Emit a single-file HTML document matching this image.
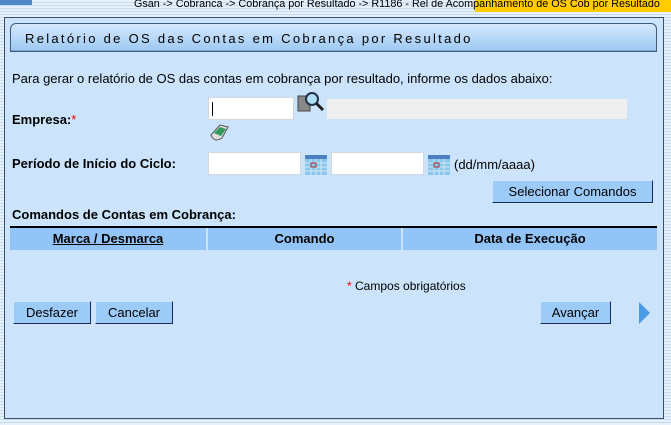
<!DOCTYPE html>
<html><head><meta charset="utf-8"><style>
*{margin:0;padding:0;box-sizing:border-box}
body{width:671px;height:425px;overflow:hidden;font-family:"Liberation Sans",Arial,sans-serif;font-size:12px;color:#000;
background:repeating-linear-gradient(to bottom,#e6f0fa 0,#e6f0fa 2px,#c8dcf0 2px,#c8dcf0 3px);position:relative}
.a{position:absolute}
.panel{left:4px;top:17px;width:660px;height:402px;background:#cbe4fb;border:1px solid #39506b}
.title{left:10px;top:23px;width:647px;height:29px;background:linear-gradient(#d6e9fc,#9cc8f3);border:1px solid #3b5a7c;border-radius:6px 6px 0 0;box-shadow:inset 0 -1px #7fa9d4}
.title span{position:absolute;left:14px;top:7px;font-size:13px;letter-spacing:2.3px;color:#000}
.inp{background:#fff;border:1px solid #d0d8e0;height:23px}
.btn{background:#9ccbf8;border-top:1px solid #cfe6fc;border-left:1px solid #cfe6fc;border-right:1px solid #1a2a5a;border-bottom:1px solid #1a2a5a;height:23px;font-size:13px;text-align:center;line-height:21px}
b{font-weight:bold}
.th{top:228px;height:22px;background:#92c4f7;font-weight:bold;font-size:13px;text-align:center;line-height:22px}
</style></head><body>
<div class="a" style="left:0;top:0;width:32px;height:5px;background:#4f86c6"></div>
<div class="a" style="left:475px;top:0;width:196px;height:12px;background:#ffcc00"></div>
<div class="a" style="left:134px;top:-2px;font-size:10.8px;white-space:nowrap">Gsan -&gt; Cobranca -&gt; Cobrança por Resultado -&gt; R1186 - Rel de Acompanhamento de OS Cob por Resultado</div>
<div class="a panel"></div>
<div class="a title"><span>Relatório de OS das Contas em Cobrança por Resultado</span></div>
<div class="a" style="left:12px;top:71px;font-size:13px">Para gerar o relatório de OS das contas em cobrança por resultado, informe os dados abaixo:</div>
<div class="a" style="left:12px;top:112px;font-size:13px"><b>Empresa:</b><span style="color:#e00">*</span></div>
<div class="a inp" style="left:208px;top:97px;width:86px"><div style="position:absolute;left:3px;top:4px;width:1px;height:14px;background:#000"></div></div>
<svg class="a" style="left:297px;top:91px" width="28" height="24"><rect x="1" y="5" width="12" height="15" fill="#888" stroke="#444"/><circle cx="15" cy="8" r="6" fill="#aee0f5" stroke="#234" stroke-width="2"/><line x1="19" y1="12" x2="26" y2="19" stroke="#222" stroke-width="3"/></svg>
<div class="a" style="left:327px;top:99px;width:300px;height:20px;background:#efefef"></div>
<svg class="a" style="left:208px;top:121px" width="24" height="22"><path d="M3 14 L12 4 L20 6 L14 17 Q6 22 3 14Z" fill="#ddd" stroke="#555"/><path d="M6 12 L12 6 L18 8 L13 15Z" fill="#2e9a5a"/></svg>
<div class="a" style="left:12px;top:156px;font-size:13px"><b>Período de Início do Ciclo:</b></div>
<div class="a inp" style="left:208px;top:152px;width:93px"></div>
<svg class="a" style="left:305px;top:155px" width="22" height="20"><rect x="0" y="0" width="22" height="20" fill="#8cc6ea"/><rect x="0" y="0" width="22" height="4" fill="#4a7fc0"/><path d="M0 8H22M0 12H22M0 16H22M6 4V20M11 4V20M16 4V20" stroke="#cfeaf8"/><rect x="6" y="8" width="5" height="4" fill="none" stroke="#a33"/></svg>
<div class="a inp" style="left:331px;top:152px;width:93px"></div>
<svg class="a" style="left:428px;top:155px" width="22" height="20"><rect x="0" y="0" width="22" height="20" fill="#8cc6ea"/><rect x="0" y="0" width="22" height="4" fill="#4a7fc0"/><path d="M0 8H22M0 12H22M0 16H22M6 4V20M11 4V20M16 4V20" stroke="#cfeaf8"/><rect x="6" y="8" width="5" height="4" fill="none" stroke="#a33"/></svg>
<div class="a" style="left:454px;top:157px;font-size:13px">(dd/mm/aaaa)</div>
<div class="a btn" style="left:492px;top:180px;width:161px">Selecionar Comandos</div>
<div class="a" style="left:12px;top:207px;font-size:13px"><b>Comandos de Contas em Cobrança:</b></div>
<div class="a" style="left:10px;top:226px;width:647px;height:2px;background:#000"></div>
<div class="a th" style="left:10px;width:196px"><u>Marca / Desmarca</u></div>
<div class="a th" style="left:208px;width:193px">Comando</div>
<div class="a th" style="left:403px;width:254px">Data de Execução</div>
<div class="a" style="left:347px;top:279px;font-size:12px"><span style="color:#e00">*</span> Campos obrigatórios</div>
<div class="a btn" style="left:13px;top:301px;width:78px">Desfazer</div>
<div class="a btn" style="left:95px;top:301px;width:78px">Cancelar</div>
<div class="a btn" style="left:540px;top:301px;width:71px">Avançar</div>
<svg class="a" style="left:638px;top:301px" width="14" height="24"><path d="M1 1 L12 12 L1 23Z" fill="#4a9ce8"/></svg>
</body></html>
